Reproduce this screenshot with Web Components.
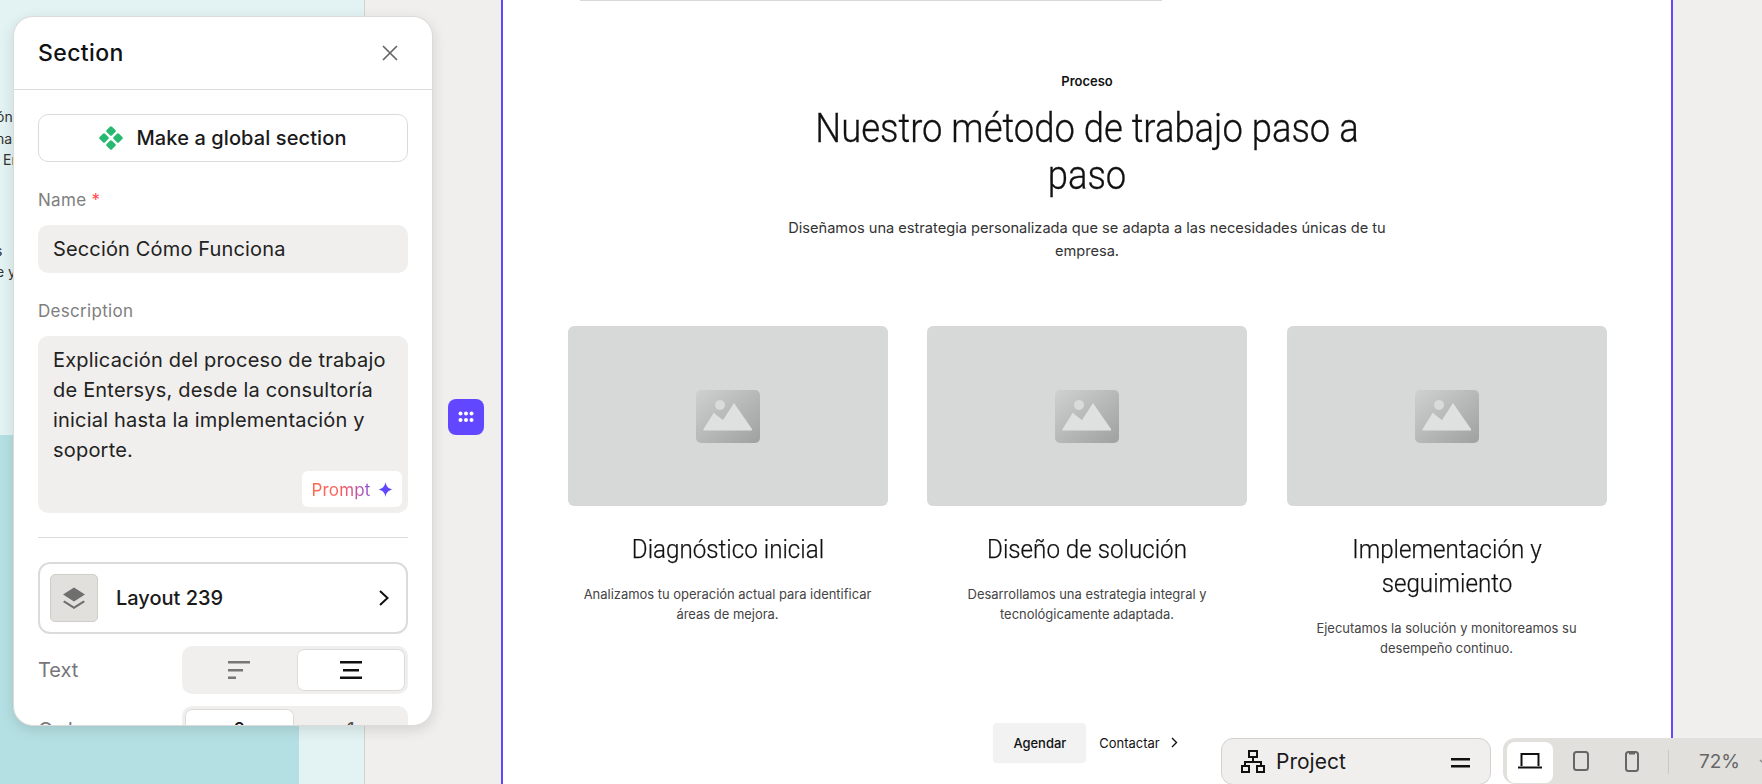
<!DOCTYPE html>
<html lang="es"><head><meta charset="utf-8"><title>Section</title>
<style>
html,body{margin:0;height:100%;overflow:hidden;background:#f0efed;font-family:Inter,"Liberation Sans",sans-serif}
</style></head><body>
<editor-canvas>
  <preview-strip></preview-strip>
  <section-page>
    <step-card title-text="Diagnóstico inicial" text="Analizamos tu operación actual para identificar áreas de mejora."></step-card>
    <step-card title-text="Diseño de solución" text="Desarrollamos una estrategia integral y tecnológicamente adaptada."></step-card>
    <step-card title-text="Implementación y seguimiento" text="Ejecutamos la solución y monitoreamos su desempeño continuo."></step-card>
  </section-page>
  <section-panel></section-panel>
  <drag-handle></drag-handle>
  <bottom-bar></bottom-bar>
</editor-canvas>
<script>
function def(name, html){
  customElements.define(name, class extends HTMLElement{
    constructor(){super();this.attachShadow({mode:'open'}).innerHTML=html;}
  });
}
def('editor-canvas',`<style>:host{display:flex;position:relative;width:1762px;height:784px;overflow:hidden}</style><slot></slot>`);
def('preview-strip',`<style>
:host{display:flex;flex-direction:column;width:364px;height:784px;box-sizing:content-box;border-right:1px solid #d3d2cf;background:#e3f3f3;flex:none;font:14px/21.500px Inter,sans-serif;color:#333}
.txt{height:435px;padding-top:106px;box-sizing:border-box;overflow:hidden}
.l{width:14px;height:21.500px;overflow:hidden;display:flex;white-space:nowrap}
.gap{height:69px}
.teal{flex:1;width:299px;background:#b5e0e3}
</style><div class="txt"><div class="l" style="margin-left:-4px;width:18px">ón</div><div class="l" style="margin-left:-4px;width:18px">nar</div><div class="l" style="margin-left:3px;width:11px">En</div><div class="gap"></div><div class="l" style="margin-left:-5px;width:19px">s</div><div class="l" style="margin-left:-4px;width:18px">e y</div></div><div class="teal"></div>`);
def('section-page',`<style>
:host{display:flex;flex-direction:column;align-items:center;box-sizing:border-box;width:1172px;height:784px;margin-left:136px;flex:none;background:#fff;border-left:2px solid #6147ff;border-right:2px solid #6147ff;color:#111}
.rule{align-self:flex-start;margin-left:77px;width:582px;height:1px;background:#d8d8d6;flex:none}
.tag{margin-top:71px;font:600 12.960px/18px Inter,sans-serif}
h2{margin:15px 0 0;width:640px;text-align:center;font:300 40px/47px Roboto,sans-serif;-webkit-text-stroke:.3px #111;transform:scaleX(.91);color:#111}
p{margin:18px 0 0;width:620px;text-align:center;font:400 14.620px/22.500px Inter,sans-serif;color:#333}
.grid{display:grid;grid-template-columns:repeat(3,320px);gap:39.500px;margin-top:64px;width:1039px}
.btns{display:flex;align-items:center;margin-top:auto;margin-bottom:22px;margin-right:3px;gap:13px;font:500 12.960px/18px Inter,sans-serif}
.a{padding:10.500px 20px;background:#f2f2f2;border-radius:4px;box-shadow:0 1px 1px #0001}
.c{display:flex;align-items:center;gap:10px;font-weight:400}
</style><div class="rule"></div><div class="tag">Proceso</div><h2>Nuestro método de trabajo paso a paso</h2><p>Diseñamos una estrategia personalizada que se adapta a las necesidades únicas de tu empresa.</p><div class="grid"><slot></slot></div>
<div class="btns"><span class="a">Agendar</span><span class="c">Contactar <svg width="8" height="11" viewBox="0 0 8 11"><path d="M2 1l4.500 4.500L2 10" fill="none" stroke="#111" stroke-width="1.400"/></svg></span></div>`);
customElements.define('step-card',class extends HTMLElement{constructor(){super();this.attachShadow({mode:'open'})
.innerHTML=`<style>:host{display:flex;flex-direction:column;align-items:center;text-align:center}
.img{width:320px;height:180px;background:#d7d9d9;border-radius:6px;display:flex;align-items:center;justify-content:center}
h3{margin:26px 0 0;width:320px;font:300 26px/34px Roboto,sans-serif;-webkit-text-stroke:.25px #111;transform:scaleX(.93);color:#111}
p{margin:19px 0 0;width:310px;font:400 12.960px/19.500px Inter,sans-serif;color:#444}
</style><div class="img"><svg width="64" height="53" viewBox="0 0 64 53"><defs><linearGradient id="g" x1="0" y1="0" x2="1" y2="1"><stop offset="0" stop-color="#cfd1d1"/><stop offset="1" stop-color="#9fa1a1"/></linearGradient></defs><rect width="64" height="53" rx="5" fill="url(#g)"/><circle cx="24" cy="15" r="5" fill="#d9dbdb"/><path d="M8 40.500a1 1 0 0 1-.5-1.500L17 24a1 1 0 0 1 2 0l8 6 10-15.500a1 1 0 0 1 2 0L56 39a1 1 0 0 1-.5 1.500z" fill="#dfe1e1"/></svg></div><h3>${this.getAttribute('title-text')}</h3><p>${this.getAttribute('text')}</p>`;}});
def('drag-handle',`<style>:host{position:absolute;left:448px;top:399px;width:36px;height:36px;border-radius:8px;background:#6147ff;display:flex;align-items:center;justify-content:center}</style><svg width="16" height="12" viewBox="0 0 16 12" fill="#fff"><circle cx="2.500" cy="2.500" r="2"/><circle cx="8" cy="2.500" r="2"/><circle cx="13.500" cy="2.500" r="2"/><circle cx="2.500" cy="9" r="2"/><circle cx="8" cy="9" r="2"/><circle cx="13.500" cy="9" r="2"/></svg>`);
def('section-panel',`<style>
:host{position:absolute;left:13px;top:16px;width:420px;height:710px;box-sizing:border-box;background:#fff;border:1px solid #dcdbd9;border-radius:20px;overflow:hidden;box-shadow:0 4px 14px rgba(0,0,0,.12);font-family:Inter,sans-serif;color:#111}
header{height:72px;display:flex;align-items:center;justify-content:space-between;padding:0 33px 0 24px;border-bottom:1px solid #dcdbd9;box-sizing:content-box}
h1{margin:0;font:450 23px/28px Inter,sans-serif;letter-spacing:.4px}
.body{padding:24px 24px}
.gl{height:48px;box-sizing:border-box;border:1px solid #dcdbd9;border-radius:10px;display:flex;align-items:center;justify-content:center;gap:13px;font:450 20px/24px Inter,sans-serif;letter-spacing:.1px;color:#1a1a1a}
label{display:block;font:400 17px/20px Inter,sans-serif;letter-spacing:.3px;color:#7e7e7e}
label b{color:#ff4d4d;font-weight:400}
.n{margin-top:28px}
.inp{margin-top:15px;height:48px;border-radius:10px;background:#f0efed;display:flex;align-items:center;padding:0 15px;font:400 20px/24px Inter,sans-serif;letter-spacing:.15px;color:#222}
.d{margin-top:28px}
.ta{position:relative;margin-top:15px;height:177px;box-sizing:border-box;border-radius:10px;background:#f0efed;padding:9px 15px;font:400 20px/30px Inter,sans-serif;letter-spacing:.2px;color:#222}
.pr{position:absolute;right:6px;bottom:6px;width:100px;height:36px;padding-top:1px;box-sizing:border-box;background:#fff;border-radius:6px;display:flex;align-items:center;justify-content:center;gap:7px;font:400 17px/20px Inter,sans-serif;letter-spacing:.2px}
.pr span{background:linear-gradient(90deg,#ff6a4d,#ff5a5a 50%,#8a4fe0);-webkit-background-clip:text;background-clip:text;color:transparent}
hr{margin:24px 0;border:0;border-top:1px solid #dcdbd9}
.lay{height:72px;box-sizing:border-box;border:2px solid #dcdbd9;border-radius:12px;display:flex;align-items:center;padding:0 16px 0 10px;gap:18px;font:450 20px/24px Inter,sans-serif;color:#1a1a1a}
.th{width:48px;height:48px;box-sizing:border-box;background:#e1e0dc;border:1px solid #cfcec9;border-radius:5px;display:flex;align-items:center;justify-content:center}
.lay .t{flex:1}
.row{display:flex;align-items:center;justify-content:space-between;margin-top:12px;height:48px}
.row>span{font:400 20px/24px Inter,sans-serif;color:#77767a}
.seg{width:226px;height:48px;box-sizing:border-box;background:#f0efed;border-radius:10px;padding:3px;display:flex;gap:3px}
.seg i{flex:1;display:flex;align-items:center;justify-content:center;border-radius:7px;font:normal 500 18px/24px Inter,sans-serif;color:#555}
.seg i.on{background:#fff;box-shadow:inset 0 0 0 1px #dcdbd9;color:#111}
</style>
<header><h1>Section</h1><svg width="18" height="18" viewBox="0 0 18 18"><path d="M2 2l14 14M16 2L2 16" stroke="#666" stroke-width="1.700" fill="none"/></svg></header>
<div class="body">
<div class="gl"><svg width="24" height="24" viewBox="0 0 24 24" fill="#27b96f"><rect x="8.200" y="1.200" width="7.600" height="7.600" rx="1.500" transform="rotate(45 12 5)"/><rect x="8.200" y="15.200" width="7.600" height="7.600" rx="1.500" transform="rotate(45 12 19)"/><rect x="1.200" y="8.200" width="7.600" height="7.600" rx="1.500" transform="rotate(45 5 12)"/><rect x="15.200" y="8.200" width="7.600" height="7.600" rx="1.500" transform="rotate(45 19 12)"/></svg><span>Make a global section</span></div>
<label class="n">Name <b>*</b></label>
<div class="inp">Sección Cómo Funciona</div>
<label class="d">Description</label>
<div class="ta">Explicación del proceso de trabajo de Entersys, desde la consultoría inicial hasta la implementación y soporte.<div class="pr"><span>Prompt</span><svg width="15" height="15" viewBox="0 0 14 14"><path d="M7 0c.6 4 2.500 6.300 7 7-4.500.7-6.400 3-7 7-.6-4-2.500-6.300-7-7 4.500-.7 6.400-3 7-7z" fill="#6147ff"/></svg></div></div>
<hr>
<div class="lay"><div class="th"><svg width="24" height="24" viewBox="0 0 24 24" fill="#6f6f6f"><path d="M12 1.500l11 7-11 7-11-7z"/><path d="M2.500 14.500L12 20.500l9.500-6 1.500 1.500L12 23 1 16z"/></svg></div><div class="t">Layout 239</div><svg width="12" height="18" viewBox="0 0 12 18"><path d="M2 2l7.500 7L2 16" fill="none" stroke="#111" stroke-width="2"/></svg></div>
<div class="row"><span>Text</span><div class="seg"><i><svg width="24" height="18" viewBox="0 0 24 18" fill="#777"><rect x="1" y="0" width="22" height="2.500"/><rect x="1" y="8" width="15" height="2.500"/><rect x="1" y="15.500" width="8" height="2.500"/></svg></i><i class="on"><svg width="24" height="18" viewBox="0 0 24 18" fill="#111"><rect x="1" y="0" width="22" height="2.500"/><rect x="4" y="8" width="16" height="2.500"/><rect x="1" y="15.500" width="22" height="2.500"/></svg></i></div></div>
<div class="row"><span>Order</span><div class="seg"><i class="on">2</i><i>1</i></div></div>
</div>`);
def('bottom-bar',`<style>
:host{position:absolute;left:1221px;top:738px;width:541px;height:46px;display:flex;gap:12px;font-family:Inter,sans-serif}
.p{flex:none;width:270px;height:47px;box-sizing:border-box;border:1px solid #d2d1ce;border-radius:12px;background:#f0efed;display:flex;align-items:center;padding:0 20px 0 18px;gap:10px;font:400 21px/24px Inter,sans-serif;color:#1a1a1a}
.p .t{flex:1}
.p svg:last-child{margin-top:3px}
.r{flex:1;min-width:0;overflow:hidden;height:46px;background:#e1e0dc;border-radius:12px 0 0 12px;display:flex;align-items:flex-start;padding:4px 0 0 4px;box-sizing:border-box}
.b{width:46px;height:41px;display:flex;align-items:center;justify-content:center;border-radius:8px;flex:none}
.b+.b{margin-left:5px}
.b.on{background:#fff}
.sp{width:1px;height:24px;background:#c9c8c4;margin:8px 0 0 13px;flex:none}
.z{font:400 19px/24px Inter,sans-serif;color:#666;margin:8px 0 0 30px;flex:none}
.ch{margin:17px 0 0 19px;flex:none}
</style>
<div class="p"><svg width="26" height="26" viewBox="0 0 26 26" fill="none" stroke="#111" stroke-width="2"><rect x="9" y="2" width="8" height="6"/><path d="M13 8v5M5 17v-4h16v4"/><rect x="2" y="17" width="7" height="6"/><rect x="17" y="17" width="7" height="6"/></svg><span class="t">Project</span><svg width="19" height="10" viewBox="0 0 19 10" fill="#111"><rect y="0" width="19" height="2.500"/><rect y="7" width="19" height="2.500"/></svg></div>
<div class="r">
<div class="b on"><svg width="24" height="18" viewBox="0 0 24 18" fill="none" stroke="#111" stroke-width="2" style="margin-top:-4px"><path d="M3.500 14V2h17v12"/><path d="M0 15.500h24"/></svg></div>
<div class="b"><svg width="16" height="20" viewBox="0 0 16 20" fill="none" stroke="#666" stroke-width="2" style="margin-top:-3px"><rect x="1" y="1" width="14" height="18" rx="2.500"/></svg></div>
<div class="b"><svg width="14" height="21" viewBox="0 0 14 21" fill="none" stroke="#666" stroke-width="2" style="margin-top:-3px"><rect x="1" y="1" width="12" height="19" rx="2.500"/><path d="M4 2h6" stroke-width="3"/></svg></div>
<div class="sp"></div><div class="z">72%</div><svg class="ch" width="10" height="7" viewBox="0 0 10 7"><path d="M1 1l4 4 4-4" fill="none" stroke="#888" stroke-width="1.300"/></svg>
</div>`);
</script>
</body></html>
